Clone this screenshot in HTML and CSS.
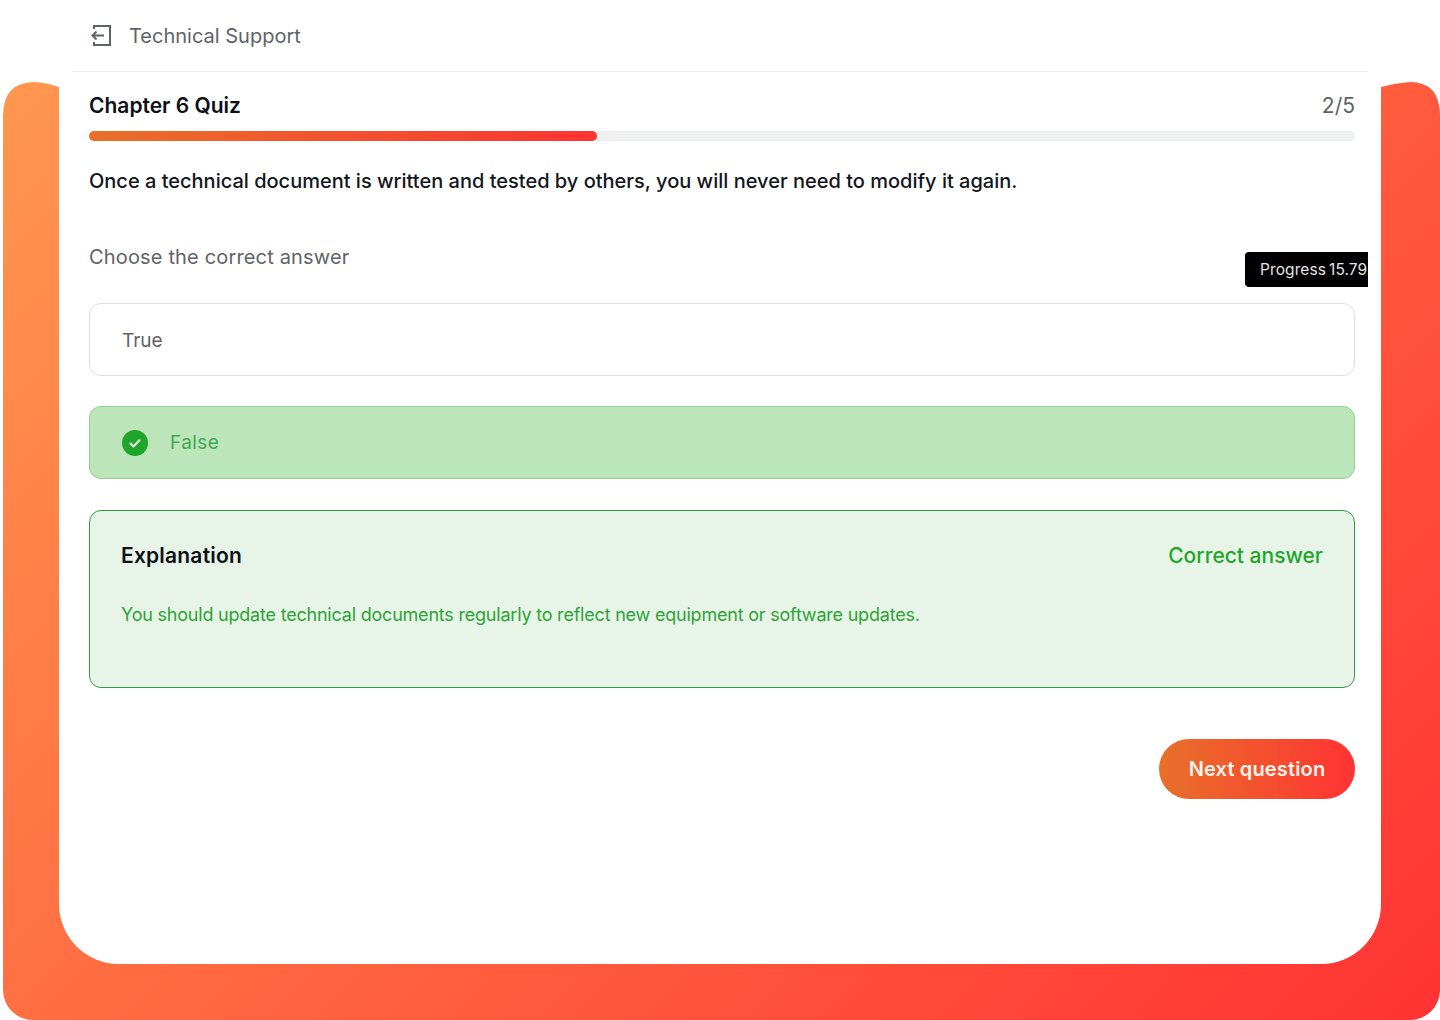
FILE: index.html
```html
<!DOCTYPE html>
<html lang="en">
<head>
    <meta charset="UTF-8">
    <meta name="viewport" content="width=device-width, initial-scale=1.0">
    <title>Chapter 6 Quiz</title>
    <link rel="stylesheet" href="styles.css">
</head>
<body>
    <div class="frame"></div>

    <div class="sheet">
        <div class="topbar">
            <svg class="exit-icon" width="22" height="24" viewBox="0 0 22 24" fill="none" stroke="#5f6368" stroke-width="2">
                <path d="M4 5V2h16v19H4v-3"/>
                <path d="M14 11.500H2M6.500 7.500l-4 4 4 4"/>
            </svg>
            <span class="course-name">Technical Support</span>
        </div>

        <div class="quiz">
            <div class="quiz-head">
                <h1 class="quiz-title">Chapter 6 Quiz</h1>
                <span class="quiz-count">2/5</span>
            </div>
            <div class="progress">
                <div class="progress-fill"></div>
            </div>

            <p class="question">Once a technical document is written and tested by others, you will never need to modify it again.</p>
            <p class="hint">Choose the correct answer</p>

            <div class="tooltip">Progress 15.79%</div>

            <div class="option option-plain">True</div>
            <div class="option option-correct">
                <svg class="check-icon" width="26" height="26" viewBox="0 0 26 26">
                    <circle cx="13" cy="13" r="13" fill="#1ea52a"/>
                    <path d="M8.500 13.500l3 3 6-6.500" fill="none" stroke="#e8f5e6" stroke-width="2" stroke-linecap="round" stroke-linejoin="round"/>
                </svg>
                <span>False</span>
            </div>

            <div class="explain">
                <div class="explain-head">
                    <span class="explain-title">Explanation</span>
                    <span class="explain-result">Correct answer</span>
                </div>
                <p class="explain-text">You should update technical documents regularly to reflect new equipment or software updates.</p>
            </div>

            <div class="actions">
                <button class="next-btn">Next question</button>
            </div>
        </div>
    </div>
</body>
</html>
```

FILE: styles.css
```css
html, body {
    margin: 0;
    height: 1020px;
    overflow: hidden;
}

body {
    font-family: "Inter", "Open Sans", sans-serif;
    background: #ffffff;
    position: relative;
}

/* orange frame behind the white sheet */
.frame {
    position: absolute;
    left: 3px;
    top: 82px;
    width: 1437px;
    height: 938px;
    background: linear-gradient(135deg, #ff974f, #ff6540 50%, #ff3333);
    clip-path: path("M0 34 Q0 0 32 0 Q45 1 56 5 L1378 5 Q1392 1 1407 0 Q1437 0 1437 34 L1437 908 A30 30 0 0 1 1407 938 L30 938 A30 30 0 0 1 0 908 Z");
}

.sheet {
    position: relative;
    margin-left: 59px;
    width: 1322px;
    height: 964px;
    padding: 0 13px;
    box-sizing: border-box;
    background: #ffffff;
    border-radius: 0 0 60px 60px;
}

.topbar {
    display: flex;
    align-items: center;
    height: 71px;
    padding-left: 18px;
    border-bottom: 1px solid #f0f0f0;
}

.exit-icon {
    margin-right: 17px;
}

.course-name {
    font-size: 20px;
    color: #5f6368;
}

.quiz {
    position: relative;
    padding: 0 13px 0 17px;
    overflow: hidden;
    height: 892px;
}

.quiz-head {
    display: flex;
    justify-content: space-between;
    align-items: center;
    height: 34px;
    margin-top: 16px;
}

.quiz-title {
    margin: 0;
    font-size: 21px;
    font-weight: 600;
    color: #0d1117;
}

.quiz-count {
    margin-top: 1px;
    font-size: 21px;
    color: #5f6368;
}

.progress {
    height: 10px;
    margin-top: 9px;
    background: #eeeff0;
    border-radius: 5px;
}

.progress-fill {
    width: 40.1%;
    height: 100%;
    background: linear-gradient(90deg, #e8702a, #ff3333);
    border-radius: 5px;
}

.question {
    margin: 26px 0 0;
    height: 28px;
    line-height: 28px;
    font-size: 20px;
    font-weight: 500;
    color: #12161c;
}

.hint {
    margin: 48px 0 0;
    height: 28px;
    line-height: 28px;
    font-size: 20px;
    color: #5f6368;
    letter-spacing: 0.16px;
}

.tooltip {
    position: absolute;
    left: 1173px;
    top: 180px;
    width: 140px;
    height: 35px;
    padding-left: 15px;
    line-height: 35px;
    font-size: 15.500px;
    letter-spacing: 0.1px;
    word-spacing: -1.500px;
    color: #e4e4e4;
    white-space: nowrap;
    background: #000000;
    border-radius: 4px;
}

.option {
    display: flex;
    align-items: center;
    height: 73px;
    margin-top: 30px;
    padding-left: 32px;
    box-sizing: border-box;
    font-size: 19px;
    color: #5f6368;
    background: #ffffff;
    border: 1.500px solid #dcdee0;
    border-radius: 12px;
}

.option-plain {
    margin-top: 32px;
    padding-top: 2px;
}

.option-correct {
    color: #45a852;
    background: #bce5ba;
    border-color: #8fcf91;
    letter-spacing: 0.4px;
}

.check-icon {
    margin-right: 22px;
}

.explain {
    height: 178px;
    margin-top: 31px;
    padding: 0 31px;
    box-sizing: border-box;
    background: #e8f4e8;
    border: 1.500px solid #2f9e3f;
    border-radius: 12px;
}

.explain-head {
    display: flex;
    justify-content: space-between;
    align-items: center;
    height: 28px;
    margin-top: 30px;
}

.explain-title {
    font-size: 21px;
    font-weight: 600;
    color: #0d1117;
    letter-spacing: 0.2px;
}

.explain-result {
    font-size: 21px;
    font-weight: 500;
    color: #1ea52a;
}

.explain-text {
    margin: 32px 0 0;
    line-height: 28px;
    font-size: 18px;
    color: #2ba436;
    letter-spacing: -0.21px;
}

.actions {
    display: flex;
    justify-content: flex-end;
    margin-top: 51px;
}

.next-btn {
    width: 196px;
    height: 60px;
    border: none;
    border-radius: 30px;
    font-family: inherit;
    font-size: 20px;
    font-weight: 600;
    letter-spacing: 0.15px;
    color: #fff4ec;
    background: linear-gradient(90deg, #e8702a, #ff3333);
}
```
